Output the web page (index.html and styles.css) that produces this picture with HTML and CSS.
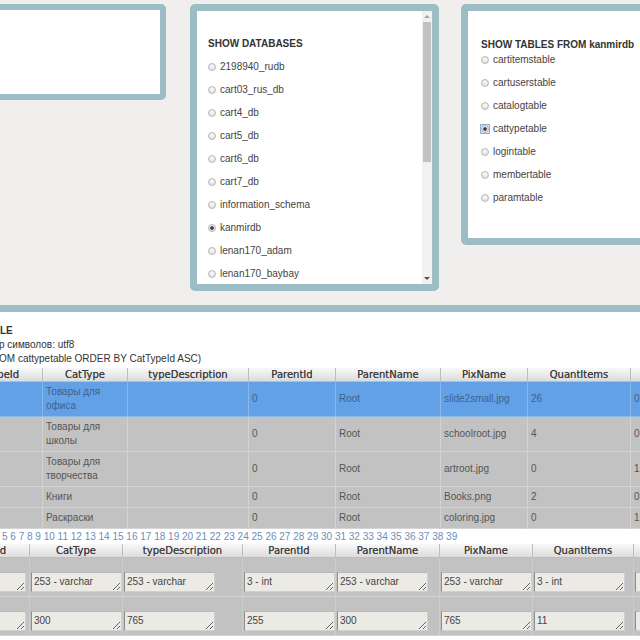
FILE: index.html
```html
<!DOCTYPE html>
<html lang="ru">
<head>
<meta charset="utf-8">
<title>DB viewer</title>
<link rel="stylesheet" href="styles.css">
</head>
<body>
<div class="top">
  <div class="panel p1"></div>
  <div class="panel p2">
    <div class="list">
      <div class="head">SHOW DATABASES</div>
      <div class="opt"><span class="radio"></span>2198940_rudb</div>
      <div class="opt"><span class="radio"></span>cart03_rus_db</div>
      <div class="opt"><span class="radio"></span>cart4_db</div>
      <div class="opt"><span class="radio"></span>cart5_db</div>
      <div class="opt"><span class="radio"></span>cart6_db</div>
      <div class="opt"><span class="radio"></span>cart7_db</div>
      <div class="opt"><span class="radio"></span>information_schema</div>
      <div class="opt"><span class="radio on"></span>kanmirdb</div>
      <div class="opt"><span class="radio"></span>lenan170_adam</div>
      <div class="opt"><span class="radio"></span>lenan170_baybay</div>
    </div>
    <div class="scroll">
      <div class="arrow up"></div>
      <div class="track"><div class="thumb"></div></div>
      <div class="arrow down"></div>
    </div>
  </div>
  <div class="panel p3">
    <div class="list">
      <div class="head">SHOW TABLES FROM kanmirdb</div>
      <div class="opt"><span class="radio"></span>cartitemstable</div>
      <div class="opt"><span class="radio"></span>cartuserstable</div>
      <div class="opt"><span class="radio"></span>catalogtable</div>
      <div class="opt"><span class="focus"><span class="radio on"></span></span>cattypetable</div>
      <div class="opt"><span class="radio"></span>logintable</div>
      <div class="opt"><span class="radio"></span>membertable</div>
      <div class="opt"><span class="radio"></span>paramtable</div>
    </div>
  </div>
</div>

<div class="main">
  <div class="info">
    <div class="title">LE</div>
    <div class="cut">р символов: utf8</div>
    <div class="cut">ОМ cattypetable ORDER BY CatTypeId ASC)</div>
  </div>

  <div class="tbl t1">
    <div class="row hdr">
      <div class="c">CatTypeId</div><div class="c">CatType</div><div class="c">typeDescription</div><div class="c">ParentId</div><div class="c">ParentName</div><div class="c">PixName</div><div class="c">QuantItems</div><div class="c"></div>
    </div>
    <div class="row data sel">
      <div class="c"></div><div class="c">Товары для офиса</div><div class="c"></div><div class="c">0</div><div class="c">Root</div><div class="c">slide2small.jpg</div><div class="c">26</div><div class="c">0</div>
    </div>
    <div class="row data">
      <div class="c"></div><div class="c">Товары для школы</div><div class="c"></div><div class="c">0</div><div class="c">Root</div><div class="c">schoolroot.jpg</div><div class="c">4</div><div class="c">0</div>
    </div>
    <div class="row data">
      <div class="c"></div><div class="c">Товары для творчества</div><div class="c"></div><div class="c">0</div><div class="c">Root</div><div class="c">artroot.jpg</div><div class="c">0</div><div class="c">1</div>
    </div>
    <div class="row data">
      <div class="c"></div><div class="c">Книги</div><div class="c"></div><div class="c">0</div><div class="c">Root</div><div class="c">Books.png</div><div class="c">2</div><div class="c">0</div>
    </div>
    <div class="row data">
      <div class="c"></div><div class="c">Раскраски</div><div class="c"></div><div class="c">0</div><div class="c">Root</div><div class="c">coloring.jpg</div><div class="c">0</div><div class="c">1</div>
    </div>
  </div>

  <div class="pager">5 6 7 8 9 10 11 12 13 14 15 16 17 18 19 20 21 22 23 24 25 26 27 28 29 30 31 32 33 34 35 36 37 38 39</div>

  <div class="tbl t2">
    <div class="row hdr">
      <div class="c">CatTypeId</div><div class="c">CatType</div><div class="c">typeDescription</div><div class="c">ParentId</div><div class="c">ParentName</div><div class="c">PixName</div><div class="c">QuantItems</div><div class="c"></div>
    </div>
    <div class="row fld">
      <div class="c"><textarea readonly></textarea></div>
      <div class="c"><textarea readonly>253 - varchar</textarea></div>
      <div class="c"><textarea readonly>253 - varchar</textarea></div>
      <div class="c"><textarea readonly>3 - int</textarea></div>
      <div class="c"><textarea readonly>253 - varchar</textarea></div>
      <div class="c"><textarea readonly>253 - varchar</textarea></div>
      <div class="c"><textarea readonly>3 - int</textarea></div>
      <div class="c"><textarea readonly></textarea></div>
    </div>
    <div class="row fld">
      <div class="c"><textarea readonly></textarea></div>
      <div class="c"><textarea readonly>300</textarea></div>
      <div class="c"><textarea readonly>765</textarea></div>
      <div class="c"><textarea readonly>255</textarea></div>
      <div class="c"><textarea readonly>300</textarea></div>
      <div class="c"><textarea readonly>765</textarea></div>
      <div class="c"><textarea readonly>11</textarea></div>
      <div class="c"><textarea readonly></textarea></div>
    </div>
  </div>
</div>
</body>
</html>
```

FILE: styles.css
```css
* { box-sizing: border-box; }
html, body { margin: 0; padding: 0; }
body {
  width: 640px;
  height: 640px;
  overflow: hidden;
  background: #f0efed;
  font-family: "Liberation Sans", Arial, sans-serif;
  font-size: 10px;
  color: #333;
}

/* top row of panels */
.top {
  display: flex;
  align-items: flex-start;
  padding-top: 4px;
}
.panel {
  flex-shrink: 0;
  border: 7px solid #9dbdc5;
  border-radius: 5px;
  background: #fff;
}
.p1 { width: 266px; height: 96px; margin-left: -100px; margin-right: 24px; border-width: 6px; }
.p2 { width: 249px; height: 287px; margin-right: 22px; display: flex; }
.p3 { width: 250px; height: 241px; }

.list { flex: 1; overflow: hidden; padding: 21px 0 0 11px; }
.p3 .list { padding: 27px 0 0 13px; }
.head { font-weight: bold; line-height: 23px; color: #333; white-space: nowrap; }
.p3 .head { line-height: 14px; margin-bottom: -4px; }
.opt {
  display: flex;
  align-items: center;
  height: 23px;
  color: #444;
  white-space: nowrap;
}
.radio {
  flex-shrink: 0;
  width: 8px;
  height: 8px;
  margin-right: 4px;
  border-radius: 50%;
  border: 1px solid #b9b9b9;
  background: radial-gradient(circle at 50% 35%, #fbfbfb, #d8d8d8);
}
.radio.on {
  background: radial-gradient(circle, #3d3d3d 0 1.4px, rgba(61,61,61,0) 2.2px),
              radial-gradient(circle at 50% 35%, #fafafa, #d0d0d0);
}
.focus {
  flex-shrink: 0;
  display: flex;
  align-items: center;
  justify-content: center;
  width: 10px;
  height: 10px;
  margin-left: -1px;
  margin-right: 3px;
  border: 1px solid #8fb0d9;
  background: #d5e4f5;
}
.focus .radio { margin-right: 0; width: 8px; height: 8px; }

/* fake scrollbar */
.scroll {
  width: 10px;
  display: flex;
  flex-direction: column;
  background: #f1f1f1;
}
.arrow {
  height: 11px;
  display: flex;
  align-items: center;
  justify-content: center;
}
.arrow::before {
  content: "";
  border-left: 3px solid transparent;
  border-right: 3px solid transparent;
}
.up::before { border-bottom: 3px solid #a5a5a5; }
.down::before { border-top: 3px solid #505050; }
.track { flex: 1; padding: 0 1px; }
.thumb { height: 140px; background: #c1c1c1; }

/* main data panel */
.main {
  margin-top: 14px;
  border-top: 7px solid #9dbdc5;
  background: #fff;
  height: 400px;
}
.info {
  padding-top: 12px;
  margin-bottom: 2px;
  line-height: 14px;
  color: #333;
  white-space: nowrap;
}
.info .title { font-weight: bold; }
.info .cut { margin-left: -1px; }

.t1 { margin-left: -53px; }
.t2 { margin-left: -66px; }
.row { display: grid; }
.t1 .row { grid-template-columns: 96px 85px 121px 87px 105px 87px 103px 80px; }
.t2 .row { grid-template-columns: 96px 93px 120px 93px 104px 93px 101px 90px; }

.hdr .c {
  background: linear-gradient(#f8f8f8, #dcdcdc);
  border-right: 1px solid #bdbdbd;
  border-bottom: 1px solid #bdbdbd;
  line-height: 13px;
  text-align: center;
  white-space: nowrap;
  overflow: hidden;
  font-family: "DejaVu Sans", Verdana, sans-serif;
  font-size: 10px;
  color: #3e3e3e;
  text-shadow: 0 0 0.4px #555;
}

.data .c {
  display: flex;
  align-items: center;
  padding: 3px;
  line-height: 14px;
  background: #c2c2c2;
  border-right: 1px solid #d3d3d3;
  border-bottom: 1px solid #d5d5d5;
  color: #555;
}
.sel .c {
  background: #63a1e7;
  border-right-color: #88b8ee;
  border-bottom-color: #8cbaee;
  color: #3f6189;
}

.pager {
  line-height: 15px;
  padding-left: 2px;
  color: #6a8fba;
  white-space: nowrap;
  background: #fff;
}

.fld .c {
  padding: 14px 1px 4px;
  background: #c2c2c2;
  border-right: 1px solid #cdcdcd;
  border-bottom: 1px solid #d3d3d3;
}
textarea {
  display: block;
  width: 91px;
  height: 20px;
  margin: 0;
  padding: 2px 2px;
  font-family: "Liberation Sans", Arial, sans-serif;
  font-size: 10px;
  line-height: 14px;
  color: #444;
  background: #eceae4;
  border: 1px solid #d0d0d0;
  border-left-color: #8d8d8d;
  border-top-color: #b8b8b8;
  border-radius: 0;
  resize: both;
  overflow: hidden;
  outline: none;
}
```
